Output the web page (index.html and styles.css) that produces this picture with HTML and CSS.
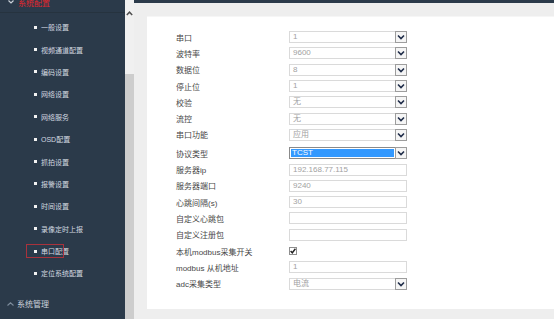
FILE: index.html
```html
<!DOCTYPE html>
<html lang="zh-CN">
<head>
<meta charset="UTF-8">
<title>串口配置</title>
<link rel="stylesheet" href="styles.css">
</head>
<body>

<div class="layout">
    <!-- left menu, scrolled down a little -->
    <aside class="sidebar">
        <div class="menu-scroll">
            <div class="menu-head open">
                <svg class="chev" width="6" height="4" viewBox="0 0 6 4"><polyline points="0.5,0.5 3,3 5.5,0.5" fill="none" stroke="#c9d0d8" stroke-width="1.2"/></svg>
                <span>系统配置</span>
            </div>
            <ul class="menu-list">
                <li><span class="dot"></span>一般设置</li>
                <li><span class="dot"></span>视频通道配置</li>
                <li><span class="dot"></span>编码设置</li>
                <li><span class="dot"></span>网络设置</li>
                <li><span class="dot"></span>网络服务</li>
                <li><span class="dot"></span>OSD配置</li>
                <li><span class="dot"></span>抓拍设置</li>
                <li><span class="dot"></span>报警设置</li>
                <li><span class="dot"></span>时间设置</li>
                <li><span class="dot"></span>录像定时上报</li>
                <li class="active"><span class="dot"></span>串口配置</li>
                <li><span class="dot"></span>定位系统配置</li>
            </ul>
            <div class="menu-head closed">
                <svg class="chev" width="7" height="4" viewBox="0 0 7 4"><polyline points="0.5,3.5 3.5,0.8 6.5,3.5" fill="none" stroke="#7d8c9c" stroke-width="1.1"/></svg>
                <span>系统管理</span>
            </div>
        </div>
    </aside>

    <!-- menu scrollbar -->
    <div class="scrollbar">
        <div class="scroll-up">
            <svg width="7" height="5" viewBox="0 0 7 5"><polyline points="0.8,4 3.5,1.2 6.2,4" fill="none" stroke="#505050" stroke-width="1.5"/></svg>
        </div>
        <div class="scroll-thumb"></div>
    </div>

    <main class="content">
        <div class="panel">
            <div class="form">
                <div class="row"><label>串口</label><div class="select"><span class="val">1</span><span class="drop"><svg width="8" height="6" viewBox="0 0 8 6"><polyline points="1,1.5 4,4.5 7,1.5" fill="none" stroke="#1e2b48" stroke-width="1.6"/></svg></span></div></div>
                <div class="row"><label>波特率</label><div class="select"><span class="val">9600</span><span class="drop"><svg width="8" height="6" viewBox="0 0 8 6"><polyline points="1,1.5 4,4.5 7,1.5" fill="none" stroke="#1e2b48" stroke-width="1.6"/></svg></span></div></div>
                <div class="row"><label>数据位</label><div class="select"><span class="val">8</span><span class="drop"><svg width="8" height="6" viewBox="0 0 8 6"><polyline points="1,1.5 4,4.5 7,1.5" fill="none" stroke="#1e2b48" stroke-width="1.6"/></svg></span></div></div>
                <div class="row"><label>停止位</label><div class="select"><span class="val">1</span><span class="drop"><svg width="8" height="6" viewBox="0 0 8 6"><polyline points="1,1.5 4,4.5 7,1.5" fill="none" stroke="#1e2b48" stroke-width="1.6"/></svg></span></div></div>
                <div class="row"><label>校验</label><div class="select"><span class="val">无</span><span class="drop"><svg width="8" height="6" viewBox="0 0 8 6"><polyline points="1,1.5 4,4.5 7,1.5" fill="none" stroke="#1e2b48" stroke-width="1.6"/></svg></span></div></div>
                <div class="row"><label>流控</label><div class="select"><span class="val">无</span><span class="drop"><svg width="8" height="6" viewBox="0 0 8 6"><polyline points="1,1.5 4,4.5 7,1.5" fill="none" stroke="#1e2b48" stroke-width="1.6"/></svg></span></div></div>
                <div class="row"><label>串口功能</label><div class="select"><span class="val">应用</span><span class="drop"><svg width="8" height="6" viewBox="0 0 8 6"><polyline points="1,1.5 4,4.5 7,1.5" fill="none" stroke="#1e2b48" stroke-width="1.6"/></svg></span></div></div>
                <div class="row row-gap"><label>协议类型</label><div class="select focus"><span class="val">TCST</span><span class="drop"><svg width="8" height="6" viewBox="0 0 8 6"><polyline points="1,1.5 4,4.5 7,1.5" fill="none" stroke="#1e2b48" stroke-width="1.6"/></svg></span></div></div>
                <div class="row"><label>服务器ip</label><div class="field">192.168.77.115</div></div>
                <div class="row"><label>服务器端口</label><div class="field">9240</div></div>
                <div class="row"><label>心跳间隔(s)</label><div class="field">30</div></div>
                <div class="row"><label>自定义心跳包</label><div class="field"></div></div>
                <div class="row"><label>自定义注册包</label><div class="field"></div></div>
                <div class="row"><label>本机modbus采集开关</label><span class="check"><svg width="6" height="6" viewBox="0 0 6 6"><polyline points="0.6,3 2.3,4.8 5.4,0.8" fill="none" stroke="#222" stroke-width="1.4"/></svg></span></div>
                <div class="row"><label>modbus 从机地址</label><div class="field">1</div></div>
                <div class="row"><label>adc采集类型</label><div class="select"><span class="val">电流</span><span class="drop"><svg width="8" height="6" viewBox="0 0 8 6"><polyline points="1,1.5 4,4.5 7,1.5" fill="none" stroke="#1e2b48" stroke-width="1.6"/></svg></span></div></div>
            </div>
        </div>
    </main>
</div>

</body>
</html>
```

FILE: styles.css
```css
/* page */
body {
    margin: 0;
    padding: 0;
    font-family: "Liberation Sans", "Noto Sans CJK SC", sans-serif;
    overflow: hidden;
}
.layout {
    display: flex;
    width: 554px;
    height: 319px;
}

/* SIDEBAR */
.sidebar {
    width: 125px;
    background-color: #2b3a4a;
    overflow: hidden;
}
.menu-scroll {
    margin-top: -8px;
}
.menu-head {
    display: flex;
    align-items: center;
    height: 20px;
    padding-left: 8px;
    font-size: 8px;
}
.menu-head .chev {
    margin-right: 4px;
}
.menu-head.open {
    color: #e3262d;
    border-bottom: 1px solid #26333f;
}
.menu-head.closed {
    color: #cdd4dc;
    margin-top: 9px;
    padding-left: 7px;
}
.menu-head.closed .chev {
    margin-right: 3px;
}
.menu-list {
    list-style: none;
    margin: 0;
    padding: 3px 0 0 0;
}
.menu-list li {
    display: flex;
    align-items: center;
    height: 22.4px;
    padding-left: 34px;
    font-size: 7px;
    color: #d3d9e0;
}
.dot {
    width: 3px;
    height: 3px;
    background-color: #f2f2f2;
    margin-right: 4px;
}
.menu-list li.active {
    position: relative;
}
.menu-list li.active::before {
    content: "";
    position: absolute;
    left: 26px;
    top: 4px;
    width: 36px;
    height: 12px;
    border: 1px solid #a8323c;
}

/* SCROLLBAR */
.scrollbar {
    width: 9px;
    display: flex;
    flex-direction: column;
    background-color: #f0f0f0;
}
.scroll-up {
    height: 74px;
    display: flex;
    justify-content: center;
    padding-top: 11px;
    box-sizing: border-box;
}
.scroll-thumb {
    flex: 1;
    background-color: #cdcdcd;
}

/* CONTENT */
.content {
    flex: 1;
    background-color: #eeeeee;
    border-top: 3px solid #2b3a4a;
    padding: 13px 0 10px 13px;
    display: flex;
}
.panel {
    flex: 1;
    background-color: #fff;
    border-top: 1px solid #f6f6f6;
}
.form {
    padding: 12px 0 0 29px;
}
.row {
    display: flex;
    align-items: center;
    height: 16.3px;
}
.row-gap {
    margin-top: 2px;
}
.row label {
    width: 113px;
    font-size: 8px;
    color: #484848;
}

/* inputs */
.field,
.select {
    width: 118px;
    height: 12px;
    box-sizing: border-box;
    border: 1px solid #dadada;
    font-size: 8px;
    color: #a2a2a2;
    line-height: 10px;
}
.field {
    padding-left: 3px;
}
.select {
    display: flex;
    align-items: center;
    border-right: none;
}
.select .val {
    flex: 1;
    padding-left: 3px;
}
.drop {
    width: 12px;
    height: 12px;
    box-sizing: border-box;
    border: 1px solid #9d9d9d;
    background-color: #f5f5f5;
    display: flex;
    align-items: center;
    justify-content: center;
}
.select.focus {
    border-color: #8a8a8a;
}
.select.focus .val {
    background-color: #3399ff;
    color: #fff;
    height: 8px;
    line-height: 8px;
    margin: 0 1px;
    padding-left: 1px;
}
.check {
    width: 8px;
    height: 8px;
    box-sizing: border-box;
    border: 1px solid #8e8e8e;
    background-color: #fff;
    display: flex;
    align-items: center;
    justify-content: center;
}
```
